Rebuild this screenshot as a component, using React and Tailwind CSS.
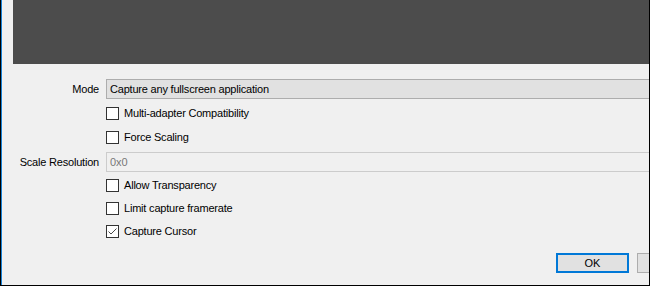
import React from "react";

const font = { fontFamily: '"Liberation Sans", Arial, sans-serif' };

const Check = ({ label, checked }) => (
  <div className="flex h-[23px] items-center">
    <span className="flex h-[13px] w-[13px] shrink-0 items-center justify-center border border-[#333333] bg-white">
      {checked && (
        <svg width="11" height="11" viewBox="0 0 11 11" fill="none">
          <path d="M1.5 5.5 L4 8 L9.5 2.5" stroke="#4a4a4a" strokeWidth="1" />
        </svg>
      )}
    </span>
    <span className="ml-[5px] whitespace-nowrap text-[11px] tracking-[-0.2px] text-black">{label}</span>
  </div>
);

const Row = ({ label, children, className = "" }) => (
  <div className={`flex items-center ${className}`}>
    <div className="w-[98px] shrink-0 pr-px text-right text-[11px] tracking-[-0.2px] text-black">{label}</div>
    <div className="ml-[6px] flex-1">{children}</div>
  </div>
);

export default function App() {
  return (
    <div className="h-[286px] w-[650px] overflow-hidden border-l border-black bg-black" style={font}>
      <div className="flex h-[285px] w-[648px] flex-col overflow-hidden border-l border-[#1883d7] bg-[#f0f0f0]">
        {/* preview area */}
        <div className="ml-[11px] h-[64px] shrink-0 bg-[#4c4c4c]" />

        <div className="mt-[15px] flex flex-col">
          <Row label="Mode">
            <div className="flex h-[20px] w-[600px] items-center border border-[#adadad] bg-[#e1e1e1] pl-[3px] text-[11px] tracking-[-0.2px] text-black">
              Capture any fullscreen application
            </div>
          </Row>

          <Row label="" className="mt-[3px]">
            <Check label="Multi-adapter Compatibility" />
          </Row>
          <Row label="" className="mt-px">
            <Check label="Force Scaling" />
          </Row>

          <Row label="Scale Resolution" className="mt-[3px]">
            <div className="flex h-[20px] w-[600px] items-center border border-[#cccccc] bg-[#f0f0f0] pl-[3px] text-[11px] text-[#787878]">
              0x0
            </div>
          </Row>

          <Row label="" className="mt-[2px]">
            <Check label="Allow Transparency" />
          </Row>
          <Row label="">
            <Check label="Limit capture framerate" />
          </Row>
          <Row label="">
            <Check label="Capture Cursor" checked />
          </Row>

          <div className="mt-[10px] flex gap-[8px] pl-[554px]">
            <button className="flex h-[20px] w-[73px] shrink-0 items-center justify-center border-2 border-[#0078d7] bg-[#e1e1e1] text-[11px] text-black">
              OK
            </button>
            <button className="h-[20px] w-[73px] shrink-0 border border-[#adadad] bg-[#e1e1e1]" />
          </div>
        </div>
      </div>
    </div>
  );
}
